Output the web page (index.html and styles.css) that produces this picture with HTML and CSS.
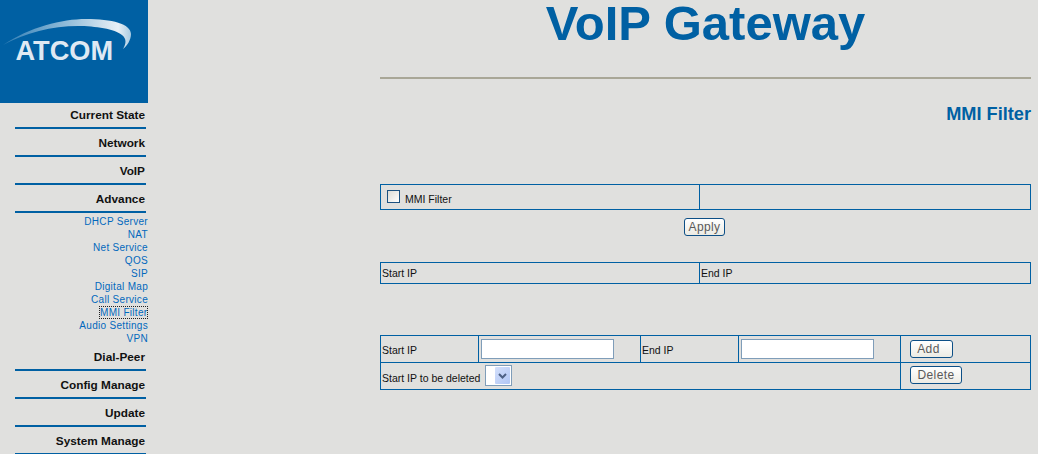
FILE: index.html
```html
<!DOCTYPE html>
<html>
<head>
    <title>VoIP Gateway</title>
    <link rel="stylesheet" href="styles.css">
</head>
<body>
    <div class="sidebar">
        <div class="logo">
            <svg width="148" height="103" viewBox="0 0 148 103">
                <defs>
                    <linearGradient id="swoosh" x1="0" y1="0" x2="1" y2="0">
                        <stop offset="0" stop-color="#2f7db5"/>
                        <stop offset="0.55" stop-color="#9cc3dd"/>
                        <stop offset="0.9" stop-color="#e8f0f6"/>
                        <stop offset="1" stop-color="#a9cbe2"/>
                    </linearGradient>
                </defs>
                <path d="M3 45 C30 27 62 19 86 19 C112 19 131 24 131 34 C131 40 127 46 123 49 C126 44 127 39 122 35 C115 29 95 26 78 26 C52 26 25 33 3 45 Z" fill="url(#swoosh)"/>
                <text x="15.5" y="60" class="logo-text">ATCOM</text>
            </svg>
        </div>
        <div class="menu first">Current State</div>
        <div class="menu">Network</div>
        <div class="menu">VoIP</div>
        <div class="menu">Advance</div>
        <div class="submenu">
            <a href="#">DHCP Server</a>
            <a href="#">NAT</a>
            <a href="#">Net Service</a>
            <a href="#">QOS</a>
            <a href="#">SIP</a>
            <a href="#">Digital Map</a>
            <a href="#">Call Service</a>
            <a href="#" class="focused">MMI Filter</a>
            <a href="#">Audio Settings</a>
            <a href="#">VPN</a>
        </div>
        <div class="menu">Dial-Peer</div>
        <div class="menu">Config Manage</div>
        <div class="menu">Update</div>
        <div class="menu">System Manage</div>
    </div>

    <div class="main">
        <h1>VoIP Gateway</h1>
        <hr>
        <h2>MMI Filter</h2>

        <table class="enable">
            <tr>
                <td class="half"><input type="checkbox" class="check"><span>MMI Filter</span></td>
                <td></td>
            </tr>
        </table>
        <div class="apply"><button>Apply</button></div>

        <table class="list">
            <tr>
                <td class="half">Start IP</td>
                <td>End IP</td>
            </tr>
        </table>

        <table class="edit">
            <tr class="row-a">
                <td class="c1">Start IP</td>
                <td class="c2"><input type="text" class="ip"></td>
                <td class="c3">End IP</td>
                <td class="c4"><input type="text" class="ip"></td>
                <td class="btn-cell"><button class="add">Add</button></td>
            </tr>
            <tr class="row-b">
                <td colspan="4" class="del-label">Start IP to be deleted
                    <span class="select">
                        <span class="arrow">
                            <svg width="9" height="6" viewBox="0 0 9 6"><path d="M1 1 L4.5 4.5 L8 1" fill="none" stroke="#4d6185" stroke-width="2"/></svg>
                        </span>
                    </span>
                </td>
                <td class="btn-cell"><button class="del">Delete</button></td>
            </tr>
        </table>
    </div>
</body>
</html>
```

FILE: styles.css
```css
html, body {
    height: 100%;
    overflow: hidden;
}
body {
    margin: 0;
    display: flex;
    align-items: flex-start;
    background: #e0e0de;
    font-family: "Liberation Sans", Arial, sans-serif;
}
.sidebar {
    width: 148px;
    flex: none;
    overflow: hidden;
}
.logo {
    height: 103px;
    background: #0060a3;
}
.logo svg { display: block; }
.logo-text {
    font: bold 27.2px "Liberation Sans", Arial, sans-serif;
    fill: #dfe9f3;
}
.menu {
    height: 28px;
    box-sizing: border-box;
    margin: 0 2px 0 15px;
    padding-right: 1px;
    border-bottom: 2px solid #0060a3;
    text-align: right;
    font-size: 11.8px;
    font-weight: bold;
    line-height: 29px;
    color: #111;
}
.menu.first {
    height: 26px;
    line-height: 25px;
}
.submenu {
    padding-top: 2px;
    margin-bottom: -2px;
    text-align: right;
}
.submenu a {
    display: block;
    height: 13px;
    line-height: 13px;
    font-size: 10px;
    letter-spacing: 0.3px;
    color: #0068bd;
    text-decoration: none;
    white-space: nowrap;
}
.submenu a.focused {
    box-sizing: border-box;
    width: 49px;
    margin-left: auto;
    padding-left: 1px;
    overflow: hidden;
    text-align: left;
    outline: 1px dotted #222;
    outline-offset: -1px;
}
.main {
    width: 651px;
    margin-left: 232px;
}
h1 {
    margin: 0;
    height: 52px;
    line-height: 46px;
    text-align: center;
    font-size: 49px;
    color: #0060a3;
}
hr {
    margin: 25px 0 0 0;
    height: 2px;
    border: 0;
    background: #a9a797;
}
h2 {
    margin: 26px 0 0 0;
    height: 18px;
    line-height: 18px;
    text-align: right;
    font-size: 18.2px;
    color: #0060a3;
}
table {
    width: 100%;
    border-collapse: collapse;
    table-layout: fixed;
    font-size: 10.5px;
    color: #111;
}
td {
    border: 1px solid #0060a3;
    padding: 0 1px;
}
td.half { width: 316px; }
.enable { margin-top: 61px; }
.enable td { height: 24px; }
.check {
    appearance: none;
    width: 13px;
    height: 13px;
    margin: 0 5px 0 5px;
    vertical-align: -1px;
    border: 1px solid #1c5180;
    background: linear-gradient(135deg, #dcdcd6, #fff);
}
.enable span {
    position: relative;
    top: 1px;
}
.apply {
    height: 52px;
    padding: 7px 2px 0 0;
    box-sizing: border-box;
    text-align: center;
}
.list td { height: 20px; }
.edit { margin-top: 51px; }
.row-a td { height: 26px; }
.row-b td { height: 26px; }
.row-a .c1, .row-a .c3 { padding-top: 2px; height: 24px; }
.c1 { width: 95px; }
.c2 { width: 159px; }
.c3 { width: 95px; }
.c4 { width: 159px; }
.ip {
    display: block;
    box-sizing: border-box;
    width: 133px;
    height: 20px;
    margin-left: 1px;
    border: 1px solid #7f9db9;
    background: #fff;
    padding: 0;
}
.btn-cell { padding-left: 9px; }
button {
    height: 18px;
    padding: 0;
    border: 1px solid #0d4f86;
    border-radius: 3px;
    background: linear-gradient(#fff, #ecebe4);
    font: 12px "Liberation Sans", Arial, sans-serif;
    letter-spacing: 0.4px;
    color: #5a5a5a;
    vertical-align: middle;
}
.apply button { width: 41px; }
button.add {
    width: 43px;
    padding-right: 6px;
}
button.del {
    width: 52px;
    margin-bottom: 2px;
}
.row-b .del-label {
    height: 22px;
    padding-top: 4px;
    line-height: 22px;
    vertical-align: top;
}
.select {
    display: inline-flex;
    align-items: center;
    justify-content: flex-end;
    box-sizing: border-box;
    width: 27px;
    height: 21px;
    padding-right: 1px;
    margin: -2px 0 0 2px;
    vertical-align: top;
    border: 1px solid #7f9db9;
    background: #fff;
}
.arrow {
    display: flex;
    align-items: center;
    justify-content: center;
    width: 15px;
    height: 17px;
    border-radius: 1px;
    background: linear-gradient(135deg, #d4e0fb, #b0c6f5);
}
```
